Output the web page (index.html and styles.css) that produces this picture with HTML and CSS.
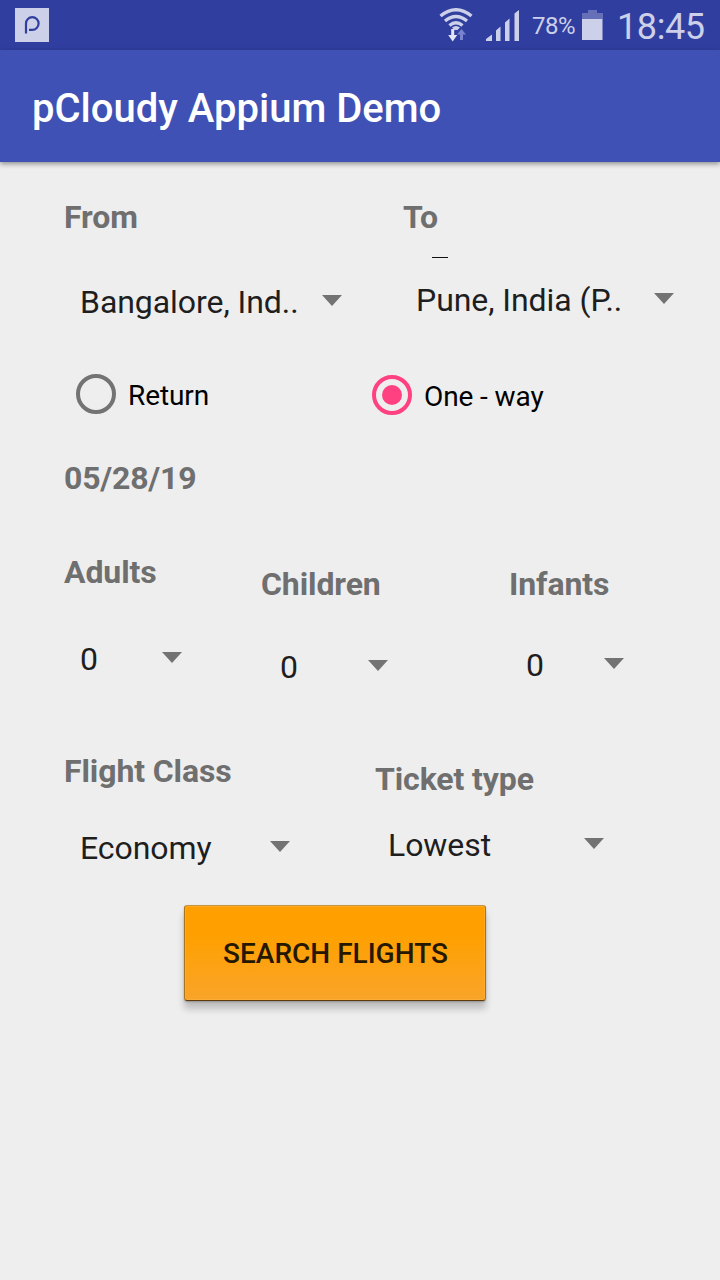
FILE: index.html
```html
<!DOCTYPE html>
<html lang="en">
<head>
<meta charset="utf-8">
<title>pCloudy Appium Demo</title>
<link rel="stylesheet" href="styles.css">
</head>
<body>
<header class="status-bar">
  <svg class="app-icon" width="34" height="34" viewBox="0 0 34 34"><rect width="34" height="34" fill="#cdd0e9"/><path d="M11 25.500V15.500a6.300 6.300 0 1 1 6.300 6.300h-3.300" fill="none" stroke="#303f9f" stroke-width="2.200"/></svg>
  <svg class="wifi" width="34" height="36" viewBox="0 0 34 36" fill="none" stroke="#cdd0e9" stroke-width="3.400">
    <path d="M1.500 8Q17-4.500 32.500 8M6 13Q17 4 28 13M10.500 17.500Q17 12 23.500 17.500"/>
    <path d="M13 19.500Q17 16.500 21 19.500L18.500 22h-3z" fill="#cdd0e9" stroke="none"/>
    <path d="M12.200 21h3v6h3l-4.500 6.500L9.200 27h3z" fill="#e2e5f7" stroke="none"/>
    <path d="M21 32v-5.500h-3l4.500-5.500 4.500 5.500h-3V32z" fill="#7983cf" stroke="none"/>
  </svg>
  <svg class="signal" width="34" height="32" viewBox="0 0 34 32" fill="#cdd0e9"><path d="M0 31v-2l6-4.500V31zM10 31V20.500l4.500-4V31zM19 31V12.500l4.500-4V31zM28.500 31V3.500L33 0v31z"/></svg>
  <span class="battery-level">78%</span>
  <svg class="battery" width="21" height="30" viewBox="0 0 21 30"><path d="M0 9V3h6V0h9v3h6v6z" fill="#6570b9"/><path d="M0 9h20.500v21H0z" fill="#cdd0e9"/></svg>
  <span class="clock">18:45</span>
</header>
<div class="app-bar"><h1 class="title">pCloudy Appium Demo</h1></div>
<main class="form">
  <section class="row route">
    <div class="field from"><div class="label">From</div><div class="spinner"><span>Bangalore, Ind..</span><i class="arrow"></i></div></div>
    <div class="field to"><div class="label">To</div><div class="dash"></div><div class="spinner"><span>Pune, India (P..</span><i class="arrow"></i></div></div>
  </section>
  <section class="row trip">
    <div class="radio return"><i class="dot"></i><span>Return</span></div>
    <div class="radio one-way"><i class="dot checked"></i><span>One - way</span></div>
  </section>
  <div class="label date">05/28/19</div>
  <section class="row passengers">
    <div class="field adults"><div class="label">Adults</div><div class="spinner"><span>0</span><i class="arrow"></i></div></div>
    <div class="field children"><div class="label">Children</div><div class="spinner"><span>0</span><i class="arrow"></i></div></div>
    <div class="field infants"><div class="label">Infants</div><div class="spinner"><span>0</span><i class="arrow"></i></div></div>
  </section>
  <section class="row options">
    <div class="field class"><div class="label">Flight Class</div><div class="spinner"><span>Economy</span><i class="arrow"></i></div></div>
    <div class="field ticket"><div class="label">Ticket type</div><div class="spinner"><span>Lowest</span><i class="arrow"></i></div></div>
  </section>
  <button class="search">SEARCH FLIGHTS</button>
</main>
</body>
</html>
```
FILE: styles.css
```css
* { box-sizing: border-box; }
body { margin: 0; min-height: 1280px; background: #eee; font-family: Roboto, "Liberation Sans", sans-serif; }
.status-bar { display: flex; align-items: flex-start; height: 50px; padding: 8px 15px 0; background: #303f9f; color: #cdd0e9; }
.status-bar svg { flex: none; display: block; }
.wifi { margin-left: 390px; }
.signal { margin: 2px 0 0 13px; }
.battery-level { width: 44px; margin: 4px 0 0 12px; font-size: 24px; line-height: 28px; letter-spacing: -0.5px; white-space: nowrap; }
.battery { margin: 2px 0 0 6px; }
.clock { margin-left: 14px; font-size: 36px; line-height: 38px; letter-spacing: -0.4px; white-space: nowrap; }
.app-bar { position: relative; height: 112px; padding: 35px 32px 0; background: #3f51b5; box-shadow: 0 2px 5px rgba(0,0,0,.4); }
.title { margin: 0; color: #fff; font-size: 40px; font-weight: 500; line-height: 48px; white-space: nowrap; }
.row { display: flex; align-items: flex-start; }
.label { color: #6f6f6f; font-size: 32px; font-weight: 700; line-height: 38px; letter-spacing: -0.1px; white-space: nowrap; }
.spinner { display: flex; justify-content: space-between; padding-left: 16px; color: #1e1e1e; font-size: 32px; line-height: 38px; letter-spacing: -0.06px; white-space: nowrap; }
.arrow { flex: none; width: 20px; height: 11px; margin-top: 12px; background: #737373; clip-path: polygon(0 0, 100% 0, 50% 100%); }
.route { height: 200px; padding: 36px 0 0 64px; }
.from { width: 278px; margin-right: 61px; }
.from .spinner { margin-top: 47px; }
.to { width: 271px; }
.dash { width: 16px; height: 1px; margin: 21px 0 23px 29px; background: #111; }
.to .spinner { padding-left: 13px; }
.trip { height: 97px; padding: 12px 0 0 76px; }
.radio { display: flex; gap: 12px; color: #000; font-size: 28px; line-height: 34px; letter-spacing: -0.1px; white-space: nowrap; }
.radio span { padding-top: 5px; }
.return { width: 296px; }
.one-way { padding-top: 1px; }
.dot { display: flex; align-items: center; justify-content: center; width: 40px; height: 40px; border: 4px solid #737373; border-radius: 50%; }
.checked { border-color: #ff4081; }
.checked::after { content: ""; width: 20px; height: 20px; border-radius: 50%; background: #ff4081; }
.date { height: 94px; padding-left: 64px; letter-spacing: -0.2px; }
.passengers { height: 199px; padding-left: 64px; }
.passengers .spinner { margin-top: 49px; }
.adults { width: 118px; margin-right: 79px; }
.children { width: 127px; padding-top: 12px; margin-right: 121px; }
.passengers .children .spinner { padding-left: 19px; margin-top: 45px; }
.infants { width: 115px; padding-top: 12px; }
.passengers .infants .spinner { padding-left: 17px; margin-top: 43px; }
.options { height: 153px; padding-left: 64px; }
.class { width: 226px; margin-right: 85px; }
.class .spinner { margin-top: 39px; }
.ticket { width: 229px; padding-top: 8px; }
.ticket .spinner { margin-top: 28px; padding-left: 13px; }
.search { display: block; width: 302px; height: 96px; margin-left: 184px; padding: 1px 0 0 1px; border: 1px solid; border-color: #c7943f #a9741f #5c3b0c; border-radius: 3px; background: linear-gradient(#ffa000 30%, #f9a42a); box-shadow: 0 8px 7px rgba(0,0,0,.2), 0 1px 2px rgba(0,0,0,.25), inset 0 0 0 1px rgba(255,180,60,.5); color: #251700; font-family: inherit; font-size: 28px; font-weight: 500; line-height: 34px; }
```
